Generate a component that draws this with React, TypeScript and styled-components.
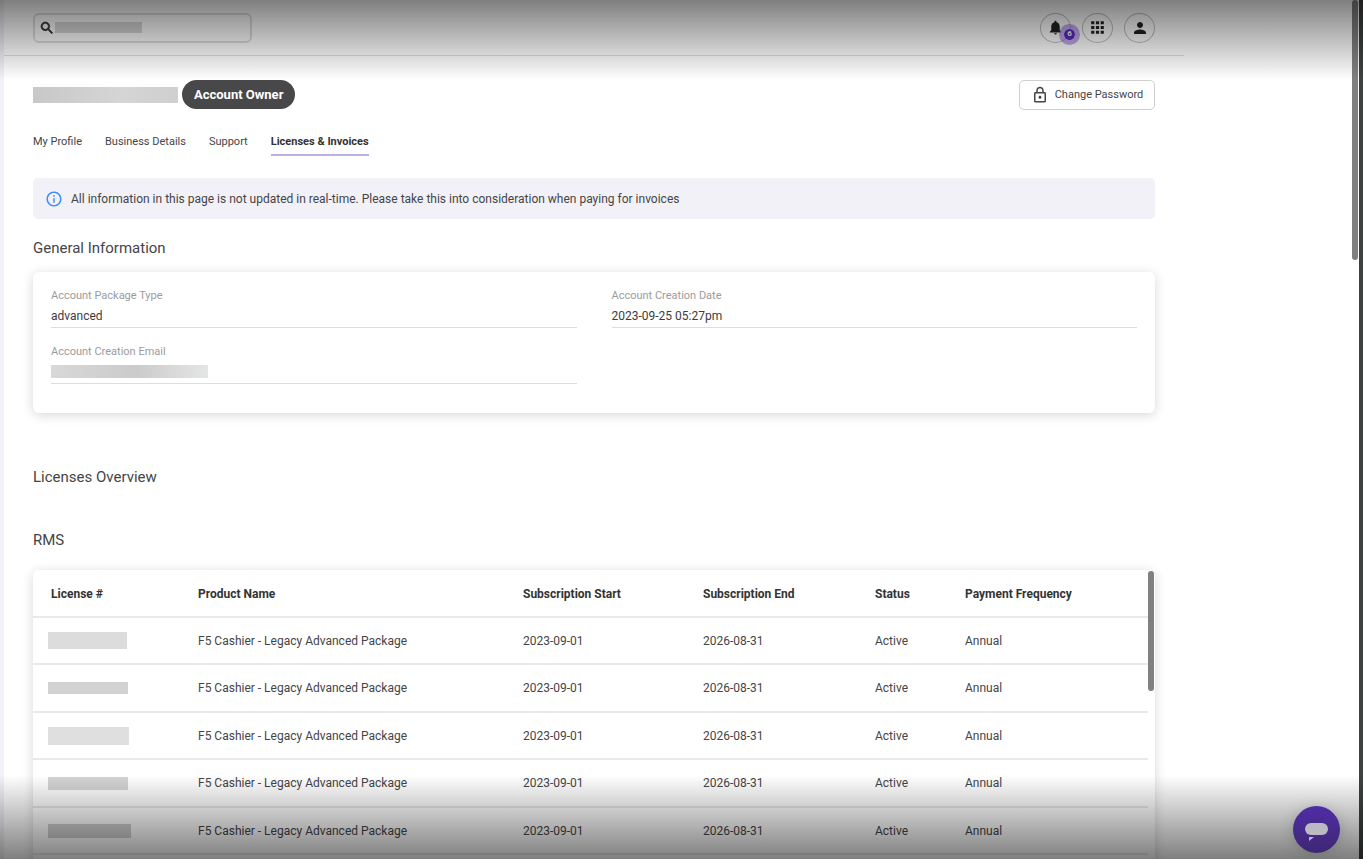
import React from "react";
import styled, { createGlobalStyle } from "styled-components";
import { MdSearch, MdNotifications, MdApps, MdPerson, MdOutlineLock, MdInfoOutline } from "react-icons/md";

const GlobalStyle = createGlobalStyle`
  * { box-sizing: border-box; }
  body {
    margin: 0;
    background: #fff;
    color: #454547;
    font-family: Roboto, "Noto Sans", sans-serif;
    font-size: 12px;
    line-height: 16px;
  }
  button, input { font: inherit; color: inherit; }
`;

const Shell = styled.div`
  position: relative;
  display: flex;
  height: 100vh;
  overflow: hidden;
`;

const Rail = styled.div`
  flex: none;
  width: 4px;
  background: #f2f1f7;
`;

const Page = styled.div`
  flex: 1;
  min-width: 0;
`;

const Column = styled.div`
  max-width: 1180px;
`;

const WindowEdge = styled.div`
  flex: none;
  display: flex;
  align-items: flex-start;
  width: 11px;
  border-right: 4px solid #3d4141;
`;

const Thumb = styled.div<{ $length: number }>`
  width: 6px;
  height: ${(p) => p.$length}px;
  border-radius: 3px;
  background: #808080;
`;

const Header = styled.header`
  display: flex;
  align-items: center;
  justify-content: space-between;
  height: 56px;
  padding: 0 29px;
  border-bottom: 1px solid #dcdcdc;
`;

const Search = styled.label`
  display: flex;
  align-items: center;
  width: 219px;
  height: 30px;
  padding: 0 4px;
  border: 2px solid #dedede;
  border-radius: 6px;
  color: #333;

  svg { flex: none; }
  svg path:last-child { stroke: currentColor; stroke-width: 1px; }

  input {
    flex: 1;
    min-width: 0;
    border: 0;
    outline: 0;
    padding: 0;
    background: transparent;
  }
`;

const Redacted = styled.span<{ $w: number; $h: number; $tone?: string }>`
  flex: none;
  display: block;
  width: ${(p) => p.$w}px;
  height: ${(p) => p.$h}px;
  background: ${(p) => p.$tone ?? "#d5d5d5"};
`;

const Actions = styled.div`
  display: flex;
  gap: 11px;
`;

const RoundButton = styled.button`
  position: relative;
  display: grid;
  place-items: center;
  width: 31px;
  height: 30px;
  padding: 0;
  border: 1px solid #bdbdbd;
  border-radius: 50%;
  background: transparent;
  color: #222224;
`;

const Badge = styled.span`
  position: absolute;
  left: 18px;
  top: 10px;
  display: grid;
  place-items: center;
  width: 21px;
  height: 21px;
  border: 5px solid rgba(150, 115, 225, 0.6);
  border-radius: 50%;
  background: #5a2bc0;
  background-clip: padding-box;
  color: #fff;
  font-size: 8px;
  font-weight: 700;
  line-height: 8px;
`;

const Content = styled.main`
  padding: 24px 29px 0;
`;

const TitleRow = styled.div`
  display: flex;
  align-items: center;
  gap: 4px;
  height: 29px;
`;

const Pill = styled.span`
  height: 29px;
  padding: 0 12px;
  border-radius: 15px;
  background: #48484a;
  color: #fff;
  font-size: 13px;
  font-weight: 700;
  line-height: 29px;
`;

const OutlineButton = styled.button`
  display: flex;
  align-items: center;
  justify-content: center;
  gap: 6px;
  width: 136px;
  height: 30px;
  margin-left: auto;
  padding: 1px 0 0;
  border: 1px solid #cfcfcf;
  border-radius: 5px;
  background: #fff;
  font-size: 11px;
`;

const Tabs = styled.nav`
  display: flex;
  gap: 23px;
  margin-top: 25px;
  font-size: 11px;
`;

const Tab = styled.a<{ $active?: boolean }>`
  height: 22px;
  border-bottom: 2px solid ${(p) => (p.$active ? "#bfb0e4" : "transparent")};
  color: ${(p) => (p.$active ? "#333" : "inherit")};
  font-weight: ${(p) => (p.$active ? 700 : 400)};
  text-decoration: none;
`;

const Notice = styled.div`
  display: flex;
  align-items: center;
  gap: 8px;
  height: 41px;
  margin-top: 22px;
  padding: 0 12px;
  border-radius: 5px;
  background: #f2f1f7;

  svg { color: #3f8cf4; }
`;

const SectionTitle = styled.h2<{ $top: number }>`
  margin: ${(p) => p.$top}px 0 0;
  font-size: 15px;
  font-weight: 400;
  line-height: 20px;
`;

const Card = styled.section`
  border-radius: 6px;
  background: #fff;
  box-shadow: 0 2px 12px rgba(0, 0, 0, 0.16);
`;

const InfoCard = styled(Card)`
  display: grid;
  grid-template-columns: 1fr 1fr;
  gap: 16px 35px;
  margin-top: 14px;
  padding: 16px 18px 29px;
`;

const Field = styled.div`
  height: 40px;
  border-bottom: 1px solid #dedede;
`;

const FieldLabel = styled.div`
  color: #9b9b9d;
  font-size: 11px;
`;

const FieldValue = styled.div`
  display: flex;
  align-items: center;
  height: 23px;
  color: #3c3c3e;
`;

const TableCard = styled(Card)`
  display: flex;
  align-items: flex-start;
  min-height: 320px;
  margin-top: 20px;
  padding: 1px 1px 0 0;
`;

const Table = styled.table`
  flex: 1;
  min-width: 0;
  table-layout: fixed;
  border-collapse: separate;
  border-spacing: 0;

  th, td {
    height: 47px;
    padding: 0 0 0 18px;
    border-bottom: 2px solid #e9e9e9;
    text-align: left;
  }
  th { color: #333; font-weight: 700; }
  tbody tr:nth-child(even) td { height: 48px; }
  td:first-child { padding-left: 15px; }
`;

const Shade = styled.div<{ $edge: "top" | "bottom" }>`
  position: absolute;
  left: 0;
  right: 0;
  ${(p) => p.$edge}: 0;
  height: ${(p) => (p.$edge === "top" ? 80 : 84)}px;
  pointer-events: none;
  background: linear-gradient(to ${(p) => p.$edge}, transparent, rgba(0, 0, 0, 0.5));
`;

const ChatButton = styled.button`
  position: absolute;
  right: 23px;
  bottom: 6px;
  width: 47px;
  height: 47px;
  padding: 0;
  border: 0;
  border-radius: 50%;
  background: linear-gradient(#4f2da6, #3e2773);
  box-shadow: 0 2px 14px rgba(60, 75, 65, 0.3);
`;

const columns = [
  { title: "License #", width: 147 },
  { title: "Product Name", width: 325 },
  { title: "Subscription Start", width: 180 },
  { title: "Subscription End", width: 172 },
  { title: "Status", width: 90 },
  { title: "Payment Frequency", width: 201 },
];

const licenses = [
  { w: 79, h: 17, tone: "#dcdcdc" },
  { w: 80, h: 12, tone: "#d2d2d2" },
  { w: 81, h: 18, tone: "#dfdfdf" },
  { w: 80, h: 13, tone: "#d4d4d6" },
  { w: 83, h: 14, tone: "#d0d0d0" },
];

export default function App() {
  return (
    <Shell>
      <GlobalStyle />
      <Rail />
      <Page>
        <Column>
          <Header>
            <Search>
              <MdSearch size={16} />
              <Redacted $w={87} $h={11} $tone="#d8d8d8" />
              <input type="search" aria-label="Search" />
            </Search>
            <Actions>
              <RoundButton aria-label="Notifications">
                <MdNotifications size={17} />
                <Badge>6</Badge>
              </RoundButton>
              <RoundButton aria-label="Apps"><MdApps size={19} /></RoundButton>
              <RoundButton aria-label="Account"><MdPerson size={18} /></RoundButton>
            </Actions>
          </Header>
          <Content>
            <TitleRow>
              <Redacted $w={145} $h={16} $tone="linear-gradient(90deg, #c8c8c8, #d5d5d5 60%, #cfcfcf)" />
              <Pill>Account Owner</Pill>
              <OutlineButton>
                <MdOutlineLock size={18} />
                Change Password
              </OutlineButton>
            </TitleRow>
            <Tabs>
              <Tab href="#profile">My Profile</Tab>
              <Tab href="#business">Business Details</Tab>
              <Tab href="#support">Support</Tab>
              <Tab href="#licenses" $active>Licenses &amp; Invoices</Tab>
            </Tabs>
            <Notice>
              <MdInfoOutline size={18} />
              All information in this page is not updated in real-time. Please take this into consideration when paying for invoices
            </Notice>
            <SectionTitle $top={19}>General Information</SectionTitle>
            <InfoCard>
              <Field>
                <FieldLabel>Account Package Type</FieldLabel>
                <FieldValue>advanced</FieldValue>
              </Field>
              <Field>
                <FieldLabel>Account Creation Date</FieldLabel>
                <FieldValue>2023-09-25 05:27pm</FieldValue>
              </Field>
              <Field>
                <FieldLabel>Account Creation Email</FieldLabel>
                <FieldValue>
                  <Redacted $w={157} $h={13} $tone="linear-gradient(90deg, #d8d8d8, #cbcbcb 55%, #e4e6e5)" />
                </FieldValue>
              </Field>
            </InfoCard>
            <SectionTitle $top={54}>Licenses Overview</SectionTitle>
            <SectionTitle $top={43}>RMS</SectionTitle>
            <TableCard>
              <Table>
                <colgroup>
                  {columns.map((c) => <col key={c.title} width={c.width} />)}
                </colgroup>
                <thead>
                  <tr>{columns.map((c) => <th key={c.title} scope="col">{c.title}</th>)}</tr>
                </thead>
                <tbody>
                  {licenses.map((l, i) => (
                    <tr key={i}>
                      <td><Redacted $w={l.w} $h={l.h} $tone={l.tone} /></td>
                      <td>F5 Cashier - Legacy Advanced Package</td>
                      <td>2023-09-01</td>
                      <td>2026-08-31</td>
                      <td>Active</td>
                      <td>Annual</td>
                    </tr>
                  ))}
                </tbody>
              </Table>
              <Thumb $length={120} />
            </TableCard>
          </Content>
        </Column>
      </Page>
      <WindowEdge><Thumb $length={260} /></WindowEdge>
      <Shade $edge="top" />
      <Shade $edge="bottom" />
      <ChatButton aria-label="Open chat">
        <svg width="47" height="47" viewBox="0 0 47 47" fill="#bdb9c2">
          <rect x="12" y="17" width="23" height="12" rx="6" />
          <path d="M16 31h5l-5 4z" />
        </svg>
      </ChatButton>
    </Shell>
  );
}
